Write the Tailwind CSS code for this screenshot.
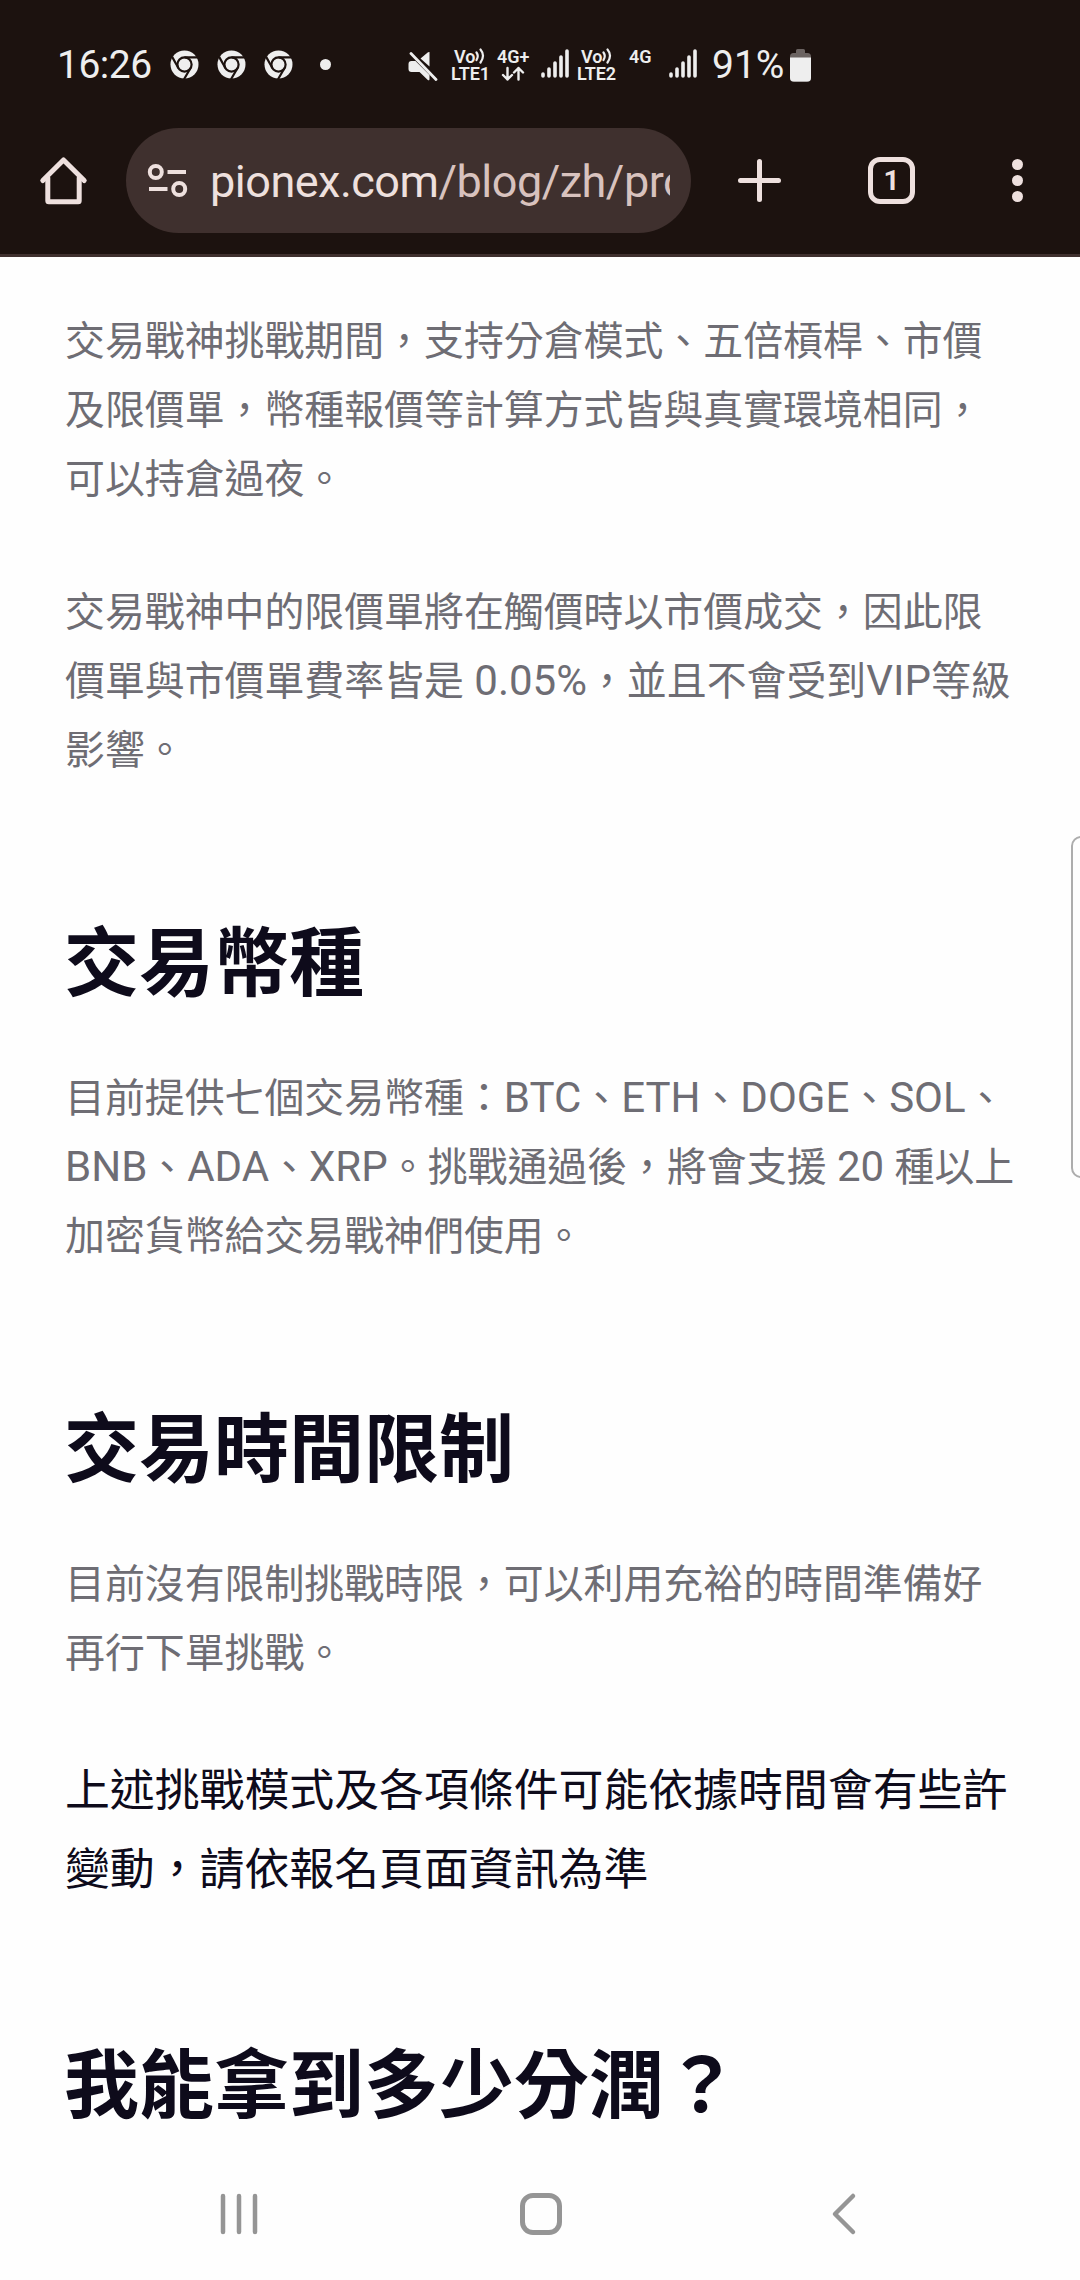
<!DOCTYPE html>
<html lang="zh-Hant">

<head>
    <meta charset="UTF-8">
    <meta name="viewport" content="width=device-width, initial-scale=1.0">
    <title>交易戰神</title>
    <script src="https://cdn.jsdelivr.net/npm/@tailwindcss/browser@4"></script>
</head>

<body class="relative flex h-[2280px] w-[1080px] flex-col overflow-hidden bg-[#fefefe] font-[Roboto,'Noto_Sans_CJK_TC',sans-serif]">
    <!-- status bar -->
    <div class="flex h-32 shrink-0 items-center bg-[#1c120f] pl-[57px] text-[#eeeeee]">
        <span class="mt-[2px] w-[113px] text-[39px] leading-none tracking-[-0.5px]">16:26</span>
        <div class="flex w-[150px] gap-[18px]">
            <svg class="size-[29px]" viewBox="0 0 29 29"><circle cx="14.5" cy="14.5" r="14" fill="#eee"/><circle cx="14.5" cy="14.5" r="7.1" fill="#eee" stroke="#1c120f" stroke-width="2.2"/><path d="M14.5 7.4H28M8.4 18 2 6.6M20.6 18 14 29.2" stroke="#1c120f" stroke-width="2.2"/></svg>
            <svg class="size-[29px]" viewBox="0 0 29 29"><circle cx="14.5" cy="14.5" r="14" fill="#eee"/><circle cx="14.5" cy="14.5" r="7.1" fill="#eee" stroke="#1c120f" stroke-width="2.2"/><path d="M14.5 7.4H28M8.4 18 2 6.6M20.6 18 14 29.2" stroke="#1c120f" stroke-width="2.2"/></svg>
            <svg class="size-[29px]" viewBox="0 0 29 29"><circle cx="14.5" cy="14.5" r="14" fill="#eee"/><circle cx="14.5" cy="14.5" r="7.1" fill="#eee" stroke="#1c120f" stroke-width="2.2"/><path d="M14.5 7.4H28M8.4 18 2 6.6M20.6 18 14 29.2" stroke="#1c120f" stroke-width="2.2"/></svg>
        </div>
        <div class="size-[11px] rounded-full bg-[#eeeeee]"></div>
        <!-- muted speaker -->
        <svg class="mt-1 ml-[77px] h-[30px] w-[30px] shrink-0" viewBox="0 0 30 30" fill="#eee"><path d="M21.500 1v14.500L12.500 7.500 20 1.200ZM3.500 10h4L21.500 24v4c0 1.500-1 1.500-2 .7L11.500 21h-8C1.500 21 .5 20 .5 18v-5c0-2 1-3 3-3Z"/><path d="m3 2.500 25 26" stroke="#eee" stroke-width="2.800" stroke-linecap="round"/></svg>
        <div class="mt-[2px] ml-[13px] w-[46px] text-center text-[18px] leading-[17.500px] font-semibold">
            <div class="flex items-center pl-[3px]">Vo<svg class="h-4 w-[11px]" viewBox="0 0 11 16" fill="none" stroke="#eee" stroke-width="2.200" stroke-linecap="round"><path d="M1.500 4.500q2.500 3.500 0 7.500M5.500 1.500q5 6 0 13"/></svg></div>
            <div class="text-left">LTE1</div>
        </div>
        <div class="mt-[3px] flex w-[44px] flex-col text-[18px] leading-[18px] font-semibold">
            <span>4G+</span>
            <svg class="ml-[4px] h-[18px] w-[24px]" viewBox="0 0 24 18" fill="none" stroke="#eee" stroke-width="2.400" stroke-linecap="round" stroke-linejoin="round"><path d="M6.500 2v11.500M2 9l4.500 4.500L11 9M17.500 13.500V2M13 6.500 17.500 2 22 6.500"/></svg>
        </div>
        <svg class="h-[30px] w-[36px] shrink-0" viewBox="0 0 36 30" stroke="#eee" stroke-width="3.600" stroke-linecap="round"><path d="M2 25v2M8 20v7M14 14v13M20 8v19M26 2v25"/></svg>
        <div class="mt-[2px] w-[52px] text-[18px] leading-[17.500px] font-semibold">
            <div class="flex items-center pl-[4px]">Vo<svg class="h-4 w-[11px]" viewBox="0 0 11 16" fill="none" stroke="#eee" stroke-width="2.200" stroke-linecap="round"><path d="M1.500 4.500q2.500 3.500 0 7.500M5.500 1.500q5 6 0 13"/></svg></div>
            <div>LTE2</div>
        </div>
        <div class="mt-[3px] h-9 w-[40px] text-[18px] leading-[18px] font-semibold">4G</div>
        <svg class="h-[30px] w-[43px] shrink-0" viewBox="0 0 43 30" stroke="#eee" stroke-width="3.600" stroke-linecap="round"><path d="M2 25v2M8 20v7M14 14v13M20 8v19M26 2v25"/></svg>
        <span class="mt-[2px] w-[78px] text-[39px] leading-none">91%</span>
        <svg class="mt-[3px] h-[33px] w-[21px]" viewBox="0 0 21 33"><path d="M6 1.500Q6 0 7.500 0h6Q15 0 15 1.500V4h2.500Q21 4 21 7.500V29q0 4-4 4H4q-4 0-4-4V7.500Q0 4 3.500 4H6Z" fill="#6b6361"/><path d="M0 8.500h21V29q0 3.500-4 3.500H4q-4 0-4-3.500Z" fill="#eee"/></svg>
    </div>

    <!-- browser toolbar -->
    <div class="flex h-[129px] shrink-0 border-b-[3px] border-[#3f302e] bg-[#1c120f]">
        <svg class="mt-[28px] ml-[39px] size-[49px] shrink-0" viewBox="0 0 49 49" fill="none" stroke="#eee0de" stroke-width="5" stroke-linejoin="round" stroke-linecap="round"><path d="M3.800 24.500 24.500 4l20.700 20.500"/><path d="M8.800 22v22.700q0 1 1 1h29.400q1 0 1-1V22"/></svg>
        <div class="ml-[38px] flex h-[105px] w-[565px] shrink-0 items-center overflow-hidden rounded-full bg-[#3f302e]">
            <svg class="ml-[21px] h-[35px] w-[41px] shrink-0" viewBox="0 0 41 35" fill="none" stroke="#eee0de" stroke-width="4"><circle cx="8.800" cy="9" r="6"/><circle cx="32.200" cy="26" r="6"/><path d="M20.500 9H39M2 26h18.500"/></svg>
            <div class="mt-[3px] ml-[22px] w-[460px] overflow-hidden text-[45px] leading-[60px] tracking-[-0.500px] whitespace-nowrap text-[#eee0de]">pionex.com<span class="text-[#d8c2be]">/blog/zh/pro</span></div>
        </div>
        <svg class="mt-[30px] ml-[46px] size-[45px] shrink-0" viewBox="0 0 45 45" stroke="#eee0de" stroke-width="5" stroke-linecap="round"><path d="M22.500 3.500v38M3.500 22.500h38"/></svg>
        <div class="mt-[29px] ml-[86px] flex size-[47px] shrink-0 items-center justify-center rounded-[12px] border-[5px] border-[#eee0de] text-[28px] leading-none font-bold text-[#eee0de]">1</div>
        <div class="mt-[31px] ml-[97px] flex flex-col gap-[5px]">
            <div class="size-[11px] rounded-full bg-[#eee0de]"></div>
            <div class="size-[11px] rounded-full bg-[#eee0de]"></div>
            <div class="size-[11px] rounded-full bg-[#eee0de]"></div>
        </div>
    </div>

    <!-- article, latin runs are set slightly larger than the CJK text -->
    <div class="flex-1 overflow-hidden pt-[51px] pl-[65px] whitespace-nowrap text-[#6e6d74]">
        <p class="text-[39.9px] leading-[68.9px]">交易戰神挑戰期間，支持分倉模式、五倍槓桿、市價<br>及限價單，幣種報價等計算方式皆與真實環境相同，<br>可以持倉過夜。</p>
        <p class="mt-[64px] text-[39.9px] leading-[68.9px]">交易戰神中的限價單將在觸價時以市價成交，因此限<br>價單與市價單費率皆是<span class="text-[42px] leading-none"> 0.05%</span>，並且不會受到<span class="text-[42px] leading-none">VIP</span>等級<br>影響。</p>
        <h2 class="mt-[134px] -ml-px text-[75px] leading-[90px] font-bold text-[#0e0b1b]">交易幣種</h2>
        <p class="mt-[56px] text-[39.9px] leading-[68.9px]">目前提供七個交易幣種：<span class="text-[42px] leading-none">BTC</span>、<span class="text-[42px] leading-none">ETH</span>、<span class="text-[42px] leading-none">DOGE</span>、<span class="text-[42px] leading-none">SOL</span>、<br><span class="text-[42px] leading-none">BNB</span>、<span class="text-[42px] leading-none">ADA</span>、<span class="text-[42px] leading-none">XRP</span>。挑戰通過後，將會支援<span class="text-[42px] leading-none"> 20 </span>種以上<br>加密貨幣給交易戰神們使用。</p>
        <h2 class="mt-[133px] -ml-px text-[75px] leading-[90px] font-bold text-[#0e0b1b]">交易時間限制</h2>
        <p class="mt-[56px] text-[39.9px] leading-[68.9px]">目前沒有限制挑戰時限，可以利用充裕的時間準備好<br>再行下單挑戰。</p>
        <p class="mt-[63px] text-[44.88px] leading-[78.75px] text-[#0e0b1b]">上述挑戰模式及各項條件可能依據時間會有些許<br>變動，請依報名頁面資訊為準</p>
        <h2 class="mt-[132px] -ml-px text-[75px] leading-[90px] font-bold text-[#0e0b1b]">我能拿到多少分潤？</h2>
    </div>

    <!-- edge panel handle -->
    <div class="absolute top-[836px] -right-[10px] h-[342px] w-[19px] rounded-l-[10px] border-2 border-[#adadad]"></div>

    <!-- navigation bar -->
    <div class="flex h-[132px] shrink-0 items-center">
        <svg class="ml-[219px] h-[44px] w-[40px]" viewBox="0 0 40 44" stroke="#959595" stroke-width="4.500" stroke-linecap="round"><path d="M4 4v36M20 4v36M36 4v36"/></svg>
        <div class="ml-[261px] size-[42px] rounded-[13px] border-[5px] border-[#959595]"></div>
        <svg class="ml-[268px] h-[44px] w-[28px]" viewBox="0 0 28 44" fill="none" stroke="#959595" stroke-width="4.500" stroke-linecap="round" stroke-linejoin="round"><path d="M23 4 5 22l18 18"/></svg>
    </div>
</body>

</html>
